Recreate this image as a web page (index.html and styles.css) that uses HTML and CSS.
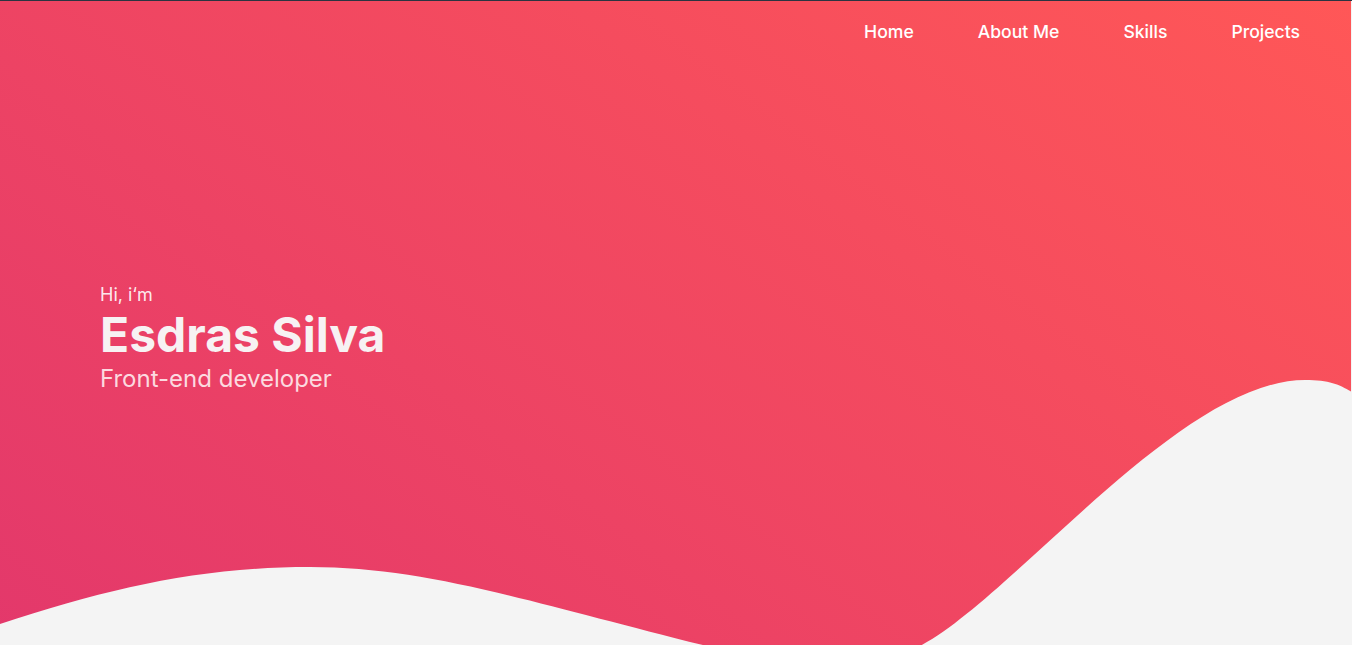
FILE: index.html
```html
<!DOCTYPE html>
<html lang="en">
<head>
<meta charset="utf-8">
<title>Esdras Silva</title>
<link rel="stylesheet" href="styles.css">
</head>
<body>
<header class="hero">
  <nav class="nav">
    <a class="nav-link" href="#home">Home</a>
    <a class="nav-link" href="#about">About Me</a>
    <a class="nav-link" href="#skills">Skills</a>
    <a class="nav-link" href="#projects">Projects</a>
  </nav>
  <div class="intro">
    <p class="greet">Hi, i‘m</p>
    <h1 class="name">Esdras Silva</h1>
    <p class="role">Front-end developer</p>
  </div>
  <svg class="waves" viewBox="0 0 1351 644" preserveAspectRatio="none" aria-hidden="true">
    <path fill="#f4f4f4" d="M0,623 C110,587 200,566 310,566 C430,566 540,604 711,646 L0,646 Z"/>
    <path fill="#f4f4f4" d="M918,646 C1010,600 1180,379 1305,379 C1330,379 1340,384 1352,391 L1352,646 Z"/>
  </svg>
</header>
</body>
</html>
```

FILE: styles.css
```css
* { box-sizing: border-box; }

html, body {
  margin: 0;
  padding: 0;
}

body {
  background: #f4f4f4;
  border-top: 1px solid #2b3441;
  font-family: Inter, "Noto Sans", "Liberation Sans", sans-serif;
  overflow: hidden;
}

.hero {
  position: relative;
  width: calc(100% - 1px);
  height: 644px;
  background: linear-gradient(37deg, #e3386b, #ff5757);
  overflow: hidden;
  display: flex;
  flex-direction: column;
}

.nav {
  display: flex;
  justify-content: flex-end;
  gap: 64px;
  padding: 20px 51px 0 0;
  position: relative;
  z-index: 1;
}

.nav-link {
  color: #ffffff;
  text-decoration: none;
  font-size: 17.6px;
  font-weight: 500;
  line-height: 21px;
}

.intro {
  margin-top: 242px;
  padding-left: 100px;
  position: relative;
  z-index: 1;
}

.greet,
.name,
.role {
  margin: 0;
  line-height: normal;
}

.greet {
  font-size: 18px;
  font-weight: 400;
  color: rgba(255, 255, 255, 0.9);
}

.name {
  font-size: 48px;
  font-weight: 700;
  color: #f7f2f3;
}

.role {
  font-size: 24px;
  font-weight: 400;
  color: rgba(255, 240, 242, 0.88);
}

.waves {
  position: absolute;
  left: 0;
  top: 0;
  width: 100%;
  height: 100%;
  display: block;
}
```
